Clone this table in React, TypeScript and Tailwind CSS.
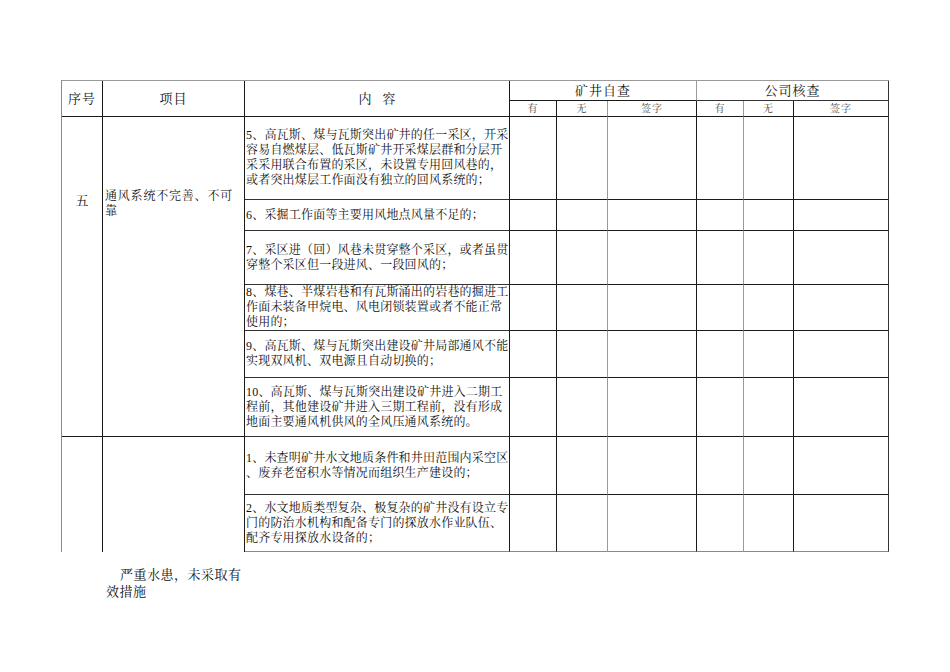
const rowStart = ["row-start-3", "row-start-4", "row-start-5", "row-start-6", "row-start-7", "row-start-8", "row-start-9", "row-start-10"];
const colStart = ["col-start-4", "col-start-5", "col-start-6", "col-start-7", "col-start-8", "col-start-9"];
const checkBorder = [
  "border-r-[#1a1a1a]",
  "border-r-[#9a9a9a]",
  "border-r-[#1a1a1a]",
  "border-r-[#9a9a9a]",
  "border-r-[#1a1a1a]",
  "border-r-[#333333]",
];

const items: string[][] = [
  [
    "5、高瓦斯、煤与瓦斯突出矿井的任一采区，开采",
    "容易自燃煤层、低瓦斯矿井开采煤层群和分层开",
    "采采用联合布置的采区，未设置专用回风巷的，",
    "或者突出煤层工作面没有独立的回风系统的；",
  ],
  ["6、采掘工作面等主要用风地点风量不足的；"],
  ["7、采区进（回）风巷未贯穿整个采区，或者虽贯", "穿整个采区但一段进风、一段回风的；"],
  [
    "8、煤巷、半煤岩巷和有瓦斯涌出的岩巷的掘进工",
    "作面未装备甲烷电、风电闭锁装置或者不能正常",
    "使用的；",
  ],
  ["9、高瓦斯、煤与瓦斯突出建设矿井局部通风不能", "实现双风机、双电源且自动切换的；"],
  [
    "10、高瓦斯、煤与瓦斯突出建设矿井进入二期工",
    "程前，其他建设矿井进入三期工程前，没有形成",
    "地面主要通风机供风的全风压通风系统的。",
  ],
  ["1、未查明矿井水文地质条件和井田范围内采空区", "、废弃老窑积水等情况而组织生产建设的；"],
  [
    "2、水文地质类型复杂、极复杂的矿井没有设立专",
    "门的防治水机构和配备专门的探放水作业队伍、",
    "配齐专用探放水设备的；",
  ],
];

function Cell({ className, children }: { className: string; children?: React.ReactNode }) {
  return <div className={`border-r border-b ${className}`}>{children}</div>;
}

export default function App() {
  return (
    <div className="min-h-[672px] bg-white pt-[80px] pl-[61px] text-[#111] font-['Liberation_Serif','Noto_Serif_CJK_SC','Noto_Sans_CJK_SC',serif]">
      <div className="grid w-[828px] grid-cols-[41px_142px_265px_47px_51px_89px_47px_50px_95px] grid-rows-[20px_16px_83px_31px_54px_46px_47px_59px_58px_57px] border-l border-t border-l-[#8a8a8a] border-t-[#9a9a9a]">
        {/* header */}
        <Cell className="col-start-1 row-start-1 row-span-2 flex items-center justify-center border-[#1a1a1a] text-[13px] tracking-[1px]">
          序号
        </Cell>
        <Cell className="col-start-2 row-start-1 row-span-2 flex items-center justify-center border-[#1a1a1a] text-[13px] tracking-[1px]">
          项目
        </Cell>
        <Cell className="col-start-3 row-start-1 row-span-2 flex items-center justify-center gap-[11px] border-[#1a1a1a] text-[13px]">
          <span>内</span>
          <span>容</span>
        </Cell>
        <Cell className="col-start-4 col-span-3 row-start-1 flex items-center justify-center border-r-[#9a9a9a] border-b-[#1a1a1a] text-[13px] tracking-[1px]">
          矿井自查
        </Cell>
        <Cell className="col-start-7 col-span-3 row-start-1 flex items-center justify-center border-[#333] text-[13px] tracking-[1px]">
          公司核查
        </Cell>
        {["有", "无", "签字", "有", "无", "签字"].map((t, i) => (
          <Cell
            key={"h" + i}
            className={`${colStart[i]} row-start-2 flex items-center justify-center border-b-[#1a1a1a] ${checkBorder[i]} text-[10px] leading-none text-[#444] tracking-[1px]`}
          >
            {t}
          </Cell>
        ))}

        {/* section 五 */}
        <Cell className="col-start-1 row-start-3 row-span-6 border-[#1a1a1a] pt-[76px] text-center text-[13px] leading-[15px]">
          五
        </Cell>
        <Cell className="col-start-2 row-start-3 row-span-6 border-[#1a1a1a] pt-[72px] pl-[2px] text-[12px] leading-[15px] tracking-[0.8px]">
          <div className="whitespace-nowrap">通风系统不完善、不可</div>
          <div>靠</div>
        </Cell>

        {/* next section, continues on next page */}
        <div className="col-start-1 row-start-9 row-span-2 border-r border-[#1a1a1a]" />
        <div className="col-start-2 row-start-9 row-span-2 border-r border-[#1a1a1a]" />

        {items.map((lines, r) => (
          <Cell
            key={"c" + r}
            className={`col-start-3 ${rowStart[r]} flex flex-col justify-center border-r-[#1a1a1a] ${
              r === 7 ? "border-b-[#8a8a8a]" : "border-b-[#333]"
            } pl-[1px] text-[12px] leading-[15px] tracking-[0.2px]`}
          >
            {lines.map((l, k) => (
              <div key={k} className="whitespace-nowrap">
                {l}
              </div>
            ))}
          </Cell>
        ))}

        {items.map((_, r) =>
          colStart.map((c, i) => (
            <Cell
              key={`k${r}-${i}`}
              className={`${c} ${rowStart[r]} ${checkBorder[i]} ${r === 7 ? "border-b-[#8a8a8a]" : "border-b-[#1a1a1a]"}`}
            />
          ))
        )}
      </div>

      <div className="mt-[14px] pl-[59px] text-[13px] leading-[17px] tracking-[0.5px] whitespace-nowrap">
        严重水患，未采取有
      </div>
      <div className="pl-[45px] text-[13px] leading-[17px] tracking-[0.5px]">效措施</div>
    </div>
  );
}
